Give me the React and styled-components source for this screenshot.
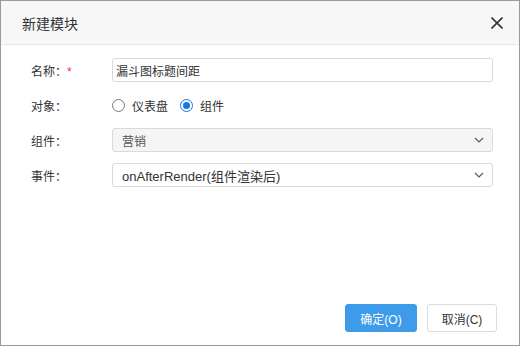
import React from 'react'
import styled, { createGlobalStyle } from 'styled-components'

const GlobalStyle = createGlobalStyle`
  html, body {
    margin: 0;
    padding: 0;
    background: #fff;
  }
  body {
    font-family: 'Liberation Sans', 'Noto Sans CJK SC', sans-serif;
    font-size: 12px;
    color: #333;
  }
`

function Chevron() {
  return (
    <svg width='10' height='6' viewBox='0 0 10 6'>
      <path d='M1 1 L5 5 L9 1' fill='none' stroke='#555' strokeWidth='1.1' />
    </svg>
  )
}

function CloseIcon() {
  return (
    <svg width='12' height='12' viewBox='0 0 12 12'>
      <path d='M0.5 0.5 L11.5 11.5 M11.5 0.5 L0.5 11.5' stroke='#333' strokeWidth='1.6' />
    </svg>
  )
}

export default function App() {
  return (
    <>
      <GlobalStyle />
      <Dialog>
        <Header>
          <Title>新建模块</Title>
          <CloseButton>
            <CloseIcon />
          </CloseButton>
        </Header>
        <Body>
          <Row>
            <Label>
              名称：<Required>*</Required>
            </Label>
            <TextInput>漏斗图标题间距</TextInput>
          </Row>
          <Row>
            <Label>对象：</Label>
            <RadioGroup>
              <RadioItem>
                <Radio />
                仪表盘
              </RadioItem>
              <RadioItem>
                <Radio checked />
                组件
              </RadioItem>
            </RadioGroup>
          </Row>
          <Row>
            <Label>组件：</Label>
            <Select disabled>
              <span>营销</span>
              <Chevron />
            </Select>
          </Row>
          <Row>
            <Label>事件：</Label>
            <Select large>
              <span>onAfterRender(组件渲染后)</span>
              <Chevron />
            </Select>
          </Row>
        </Body>
        <Footer>
          <Button primary>确定(O)</Button>
          <Button>取消(C)</Button>
        </Footer>
      </Dialog>
    </>
  )
}

const Dialog = styled.div`
  box-sizing: border-box;
  width: 520px;
  height: 346px;
  border: 1px solid #9a9a9a;
  background: #fff;
  display: flex;
  flex-direction: column;
`
const Header = styled.div`
  height: 43px;
  background: #f7f7f7;
  border-bottom: 1px solid #e6e6e6;
  display: flex;
  align-items: center;
  justify-content: space-between;
  padding: 0 16px 0 21px;
`
const Title = styled.div`
  font-size: 14px;
  color: #333;
`
const CloseButton = styled.div`
  display: flex;
  align-items: center;
`
const Body = styled.div`
  flex: 1;
  display: flex;
  flex-direction: column;
  gap: 11px;
  padding: 13px 26px 0 30px;
`
const Row = styled.div`
  display: flex;
  align-items: center;
  height: 24px;
`
const Label = styled.div`
  width: 81px;
  flex-shrink: 0;
  color: #333;
  font-size: 12px;
`
const Required = styled.span`
  color: #e53935;
`
const TextInput = styled.div`
  box-sizing: border-box;
  flex: 1;
  height: 24px;
  border: 1px solid #d9d9d9;
  border-radius: 3px;
  padding: 0 3px;
  display: flex;
  align-items: center;
  font-size: 12px;
  color: #333;
`
const Select = styled.div`
  box-sizing: border-box;
  flex: 1;
  height: 24px;
  border: 1px solid #d9d9d9;
  border-radius: 3px;
  padding: 0 8px 0 9px;
  display: flex;
  align-items: center;
  justify-content: space-between;
  background: ${(p) => (p.disabled ? '#f5f5f5' : '#fff')};
  color: ${(p) => (p.disabled ? '#555' : '#333')};
  font-size: ${(p) => (p.large ? '13px' : '12px')};
`
const RadioGroup = styled.div`
  display: flex;
  align-items: center;
  gap: 12px;
`
const RadioItem = styled.label`
  display: flex;
  align-items: center;
  gap: 7px;
  color: #333;
`
const Radio = styled.span`
  box-sizing: border-box;
  width: 13px;
  height: 13px;
  border-radius: 50%;
  border: 1px solid ${(p) => (p.checked ? '#1a73e8' : '#777')};
  display: flex;
  align-items: center;
  justify-content: center;
  &::after {
    content: '';
    display: ${(p) => (p.checked ? 'block' : 'none')};
    width: 7px;
    height: 7px;
    border-radius: 50%;
    background: #1a73e8;
  }
`
const Footer = styled.div`
  display: flex;
  justify-content: flex-end;
  gap: 10px;
  padding: 0 22px 13px 0;
`
const Button = styled.div`
  box-sizing: border-box;
  width: ${(p) => (p.primary ? '72px' : '70px')};
  height: 28px;
  border-radius: 3px;
  border: 1px solid ${(p) => (p.primary ? '#3d9be9' : '#dcdcdc')};
  background: ${(p) => (p.primary ? '#3d9be9' : '#fff')};
  color: ${(p) => (p.primary ? '#fff' : '#333')};
  display: flex;
  align-items: center;
  justify-content: center;
  font-size: 12px;
`
